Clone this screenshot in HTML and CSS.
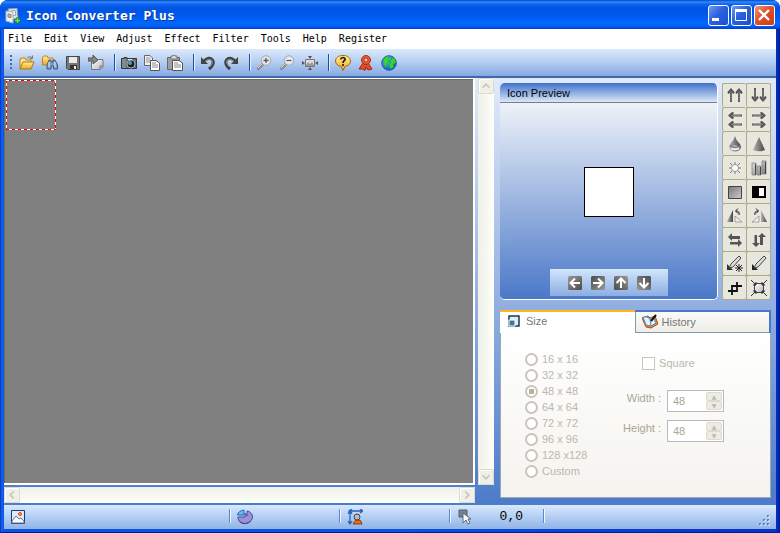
FILE: index.html
```html
<!DOCTYPE html>
<html lang="en">
<head>
<meta charset="utf-8">
<title>Icon Converter Plus</title>
<link rel="stylesheet" href="styles.css">
</head>
<body>
<svg class="defs" aria-hidden="true">
  <defs>
    <linearGradient id="gold" x1="0" y1="0" x2="0" y2="1"><stop offset="0" stop-color="#fff0a0"/><stop offset="1" stop-color="#eda51c"/></linearGradient>
    <linearGradient id="metal" x1="0" y1="0" x2="1" y2="1"><stop offset="0" stop-color="#e8e8e8"/><stop offset="1" stop-color="#777"/></linearGradient>
    <linearGradient id="dark" x1="0" y1="0" x2="1" y2="0"><stop offset="0" stop-color="#b5b5b5"/><stop offset="1" stop-color="#444"/></linearGradient>
    <linearGradient id="gray" x1="0" y1="0" x2="1" y2="1"><stop offset="0" stop-color="#777"/><stop offset="1" stop-color="#ccc"/></linearGradient>
    <linearGradient id="paper" x1="0" y1="0" x2="1" y2="1"><stop offset="0" stop-color="#fff"/><stop offset="1" stop-color="#b5b8bc"/></linearGradient>
    <radialGradient id="globe" cx=".35" cy=".3" r=".8"><stop offset="0" stop-color="#66c8ff"/><stop offset="1" stop-color="#0848c8"/></radialGradient>
    <radialGradient id="lens"><stop offset="0" stop-color="#fff"/><stop offset="1" stop-color="#d2d8e2"/></radialGradient>
    <linearGradient id="tile" x1="0" y1="0" x2="1" y2="1"><stop offset="0" stop-color="#999"/><stop offset="1" stop-color="#4a4a4a"/></linearGradient>
    <symbol id="arrow-up" viewBox="0 0 8 14"><path d="M4 0 7.500 4 7 6 5 5V14H3V5L1 6 .5 4Z" fill="#555"/><path d="M4 3V13" stroke="#999" stroke-width=".7"/></symbol>
    <symbol id="arrow-left" viewBox="0 0 14 7"><path d="M0 3.500 4 0 6 .5 5 2.500H14V4.500H5L6 6.500 4 7Z" fill="#555"/><path d="M3 3.500H13" stroke="#999" stroke-width=".7"/></symbol>
    <symbol id="nav-left" viewBox="0 0 14 14"><rect width="14" height="14" rx="1.500" fill="url(#tile)"/><path d="M7 2.500 2.500 7 7 11.500M3 7H12" fill="none" stroke="#fff" stroke-width="2"/></symbol>
  </defs>
</svg>
<div class="window">
  <header class="titlebar">
    <svg class="icon" viewBox="0 0 16 16"><path d="M3 1 12 0 13 10 5 12Z" fill="#dce5ef" stroke="#8799ad"/><path d="M6 3 10 2.500 11 7 7 8Z" fill="#fff" stroke="#829ab2"/><path d="M1 3 8 4V15L1 13Z" fill="#f0f0ee" stroke="#b0b0b4"/><path d="M3 6 6 6.500V9.500L3 9Z" fill="#adc6dd" stroke="#6b7f91"/><path d="M9.500 12.500H15.500M12.500 9.500V15.500" stroke="#087c20" stroke-width="3"/><path d="M10 12.500H15M12.500 10V15" stroke="#72df55" stroke-width="1.500"/></svg>
    <h1>Icon Converter Plus</h1>
    <button class="caption" aria-label="Minimize"><svg viewBox="0 0 21 21"><path d="M4 14.500H11" stroke="#fff" stroke-width="3"/></svg></button>
    <button class="caption" aria-label="Maximize"><svg viewBox="0 0 21 21"><path d="M4.500 6V15.500H15.500V6" fill="none" stroke="#fff"/><path d="M4 5.500H16" stroke="#fff" stroke-width="3"/></svg></button>
    <button class="caption close" aria-label="Close"><svg viewBox="0 0 21 21"><path d="M5 5 15 15M15 5 5 15" stroke="#fff" stroke-width="2.400"/></svg></button>
  </header>
  <nav class="menu">
    <button>File</button><button>Edit</button><button>View</button><button>Adjust</button><button>Effect</button><button>Filter</button><button>Tools</button><button>Help</button><button>Register</button>
  </nav>
  <div class="toolbar">
    <span class="grip"></span>
    <button aria-label="Open"><svg class="icon" viewBox="0 0 16 16"><path d="M1 14V4L3 3H6L7 5H12V8" fill="#ffe48d" stroke="#bc831e"/><path d="M1 14 4 7H15L12 14Z" fill="url(#gold)" stroke="#ad731a"/><path d="M8 3Q10 .5 13 2.500M13.500 .5V3.500H10.500" fill="none" stroke="#777"/></svg></button>
    <button aria-label="Browse"><svg class="icon" viewBox="0 0 16 16"><path d="M.5 10V2L2 1H5L6 3H11V10Z" fill="url(#gold)" stroke="#bd8322"/><path d="M5 14V10L7 5H9V7H11V5H13L15.500 10V14H11.500V11H9V14Z" fill="#7f9fc8" stroke="#385d88"/><path d="M7 7V12M13 7V12" stroke="#dbeaff"/></svg></button>
    <button aria-label="Save"><svg class="icon" viewBox="0 0 16 16"><path d="M1.500 1.500H14.500V14.500H3L1.500 13Z" fill="#777" stroke="#474747"/><path d="M4 2H12V8H4Z" fill="#e9e9e9"/><path d="M5 10H12V14H5Z" fill="#333"/><path d="M9 11H11V14H9Z" fill="#eee"/></svg></button>
    <button aria-label="Export"><svg class="icon" viewBox="0 0 16 16"><path d="M3.500 4.500H15V12L12 14.500H3.500Z" fill="url(#paper)" stroke="#72777f"/><path d="M15 11H12V14" fill="none" stroke="#777"/><path d="M0 3H5V0L10 5 5 9V6H0Z" fill="#858585" stroke="#555"/></svg></button>
    <i></i>
    <button aria-label="Capture"><svg class="icon" viewBox="0 0 16 16"><path d="M.5 3.500H3V2.500H6V3.500H15.500V13.500H.5Z" fill="#687078" stroke="#33383d"/><path d="M2 4V13M4 4V13" stroke="#9ca2a7"/><circle cx="10" cy="9" r="4" fill="#172127" stroke="#a8adb0"/><circle cx="9" cy="8" r="2" fill="#5396bb"/><path d="M7 4H11V5H7" fill="#ddd"/></svg></button>
    <button aria-label="Copy"><svg class="icon" viewBox="0 0 16 16"><path d="M.5 .5H6L8.500 3V10.500H.5Z" fill="#eee" stroke="#666"/><path d="M2 3H6M2 5H7M2 7H7" stroke="#999"/><path d="M6.500 5.500H12L15.500 8V15.500H6.500Z" fill="#fff" stroke="#555"/><path d="M8 8H12M8 10H14M8 12H14" stroke="#888"/></svg></button>
    <button aria-label="Paste"><svg class="icon" viewBox="0 0 16 16"><path d="M.5 2.500H12.500V14.500H.5Z" fill="#a0a0a0" stroke="#666"/><path d="M4 1H6L7 0 8 1H10V4H4Z" fill="#ddd" stroke="#777"/><path d="M5.500 5.500H12L15.500 8V15.500H5.500Z" fill="#fff" stroke="#555"/><path d="M7 8H11M7 10H14M7 12H14" stroke="#888"/></svg></button>
    <i></i>
    <button aria-label="Undo"><svg class="icon" viewBox="0 0 16 16"><path id="undo" d="M4 6Q9 1 12.500 5 15 9 9 14" fill="none" stroke="#3e3e3e" stroke-width="3"/><path d="M1 2V9H8Z" fill="#444"/><path d="M5 6Q9 2.500 12 5 14 8 10 12" fill="none" stroke="#858585"/></svg></button>
    <button aria-label="Redo"><svg class="icon" viewBox="0 0 16 16"><path d="M12 6Q7 1 3.500 5 1 9 7 14" fill="none" stroke="#3e3e3e" stroke-width="3"/><path d="M15 2V9H8Z" fill="#444"/><path d="M11 6Q7 2.500 4 5 2 8 6 12" fill="none" stroke="#858585"/></svg></button>
    <i></i>
    <button aria-label="Zoom in"><svg class="icon" viewBox="0 0 16 16"><path d="M7 9 1.500 14.500" stroke="#8e8981" stroke-width="3"/><path d="M6 9 2 13" stroke="#dedbd5"/><circle cx="10" cy="5.500" r="4.800" fill="url(#lens)" stroke="#aaa"/><path d="M7.500 5.500H12.500M10 3V8" stroke="#555" stroke-width="1.300"/></svg></button>
    <button aria-label="Zoom out"><svg class="icon" viewBox="0 0 16 16"><path d="M7 9 1.500 14.500" stroke="#8e8981" stroke-width="3"/><path d="M6 9 2 13" stroke="#dedbd5"/><circle cx="10" cy="5.500" r="4.800" fill="url(#lens)" stroke="#aaa"/><path d="M7.500 5.500H12.500" stroke="#555" stroke-width="1.300"/></svg></button>
    <button aria-label="Fit"><svg class="icon" viewBox="0 0 16 16"><path d="M3.500 4.500H12.500V11.500H3.500Z" fill="#ddd" stroke="#777"/><path d="M4 10 6 7 8 9 10 7 12 10V11H4Z" fill="#999"/><path d="M6 1H10L8 4ZM6 15H10L8 12ZM0 6V10L3 8ZM16 6V10L13 8Z" fill="#555"/></svg></button>
    <i></i>
    <button aria-label="Help"><svg class="icon" viewBox="0 0 16 16"><path d="M8 .5C3 .5 .5 3 .5 6S3 11 6 11.500L8 15.500 10 11.500C13 11 15.500 9 15.500 6S13 .5 8 .5Z" fill="url(#gold)" stroke="#a96800"/><path d="M5.500 4.500Q6 2.500 8 2.500 10.500 3 10 5 8 6 8 8M8 9V11" fill="none" stroke="#291c00" stroke-width="1.700"/></svg></button>
    <button aria-label="Register"><svg class="icon" viewBox="0 0 16 16"><path d="M5 8 1 14H5L7 15.500 8 12 10 15 14 14 10 8Z" fill="#e74b25" stroke="#9e260e"/><circle cx="8" cy="5" r="4.500" fill="#ec5932" stroke="#aa2c10"/><circle cx="8" cy="5" r="2" fill="#ffc4a9" stroke="#b23a1c"/></svg></button>
    <button aria-label="Web site"><svg class="icon" viewBox="0 0 16 16"><circle cx="8" cy="8" r="7.300" fill="url(#globe)" stroke="#245ac1"/><path d="M2 5 5 1.500 8 1 7 4 9 6 6 8 5 13 3 10ZM10 1.500 14 4 15 8 12 9 13 12 9 14 8 10 10 7 8 6 11 4Z" fill="#36d52f" stroke="#159a21" stroke-width=".5"/></svg></button>
  </div>
  <main class="work">
    <section class="editor">
      <div class="canvas"><div class="selection"></div></div>
      <div class="scroll vertical">
        <button aria-label="Scroll up"><svg viewBox="0 0 16 16"><path d="M4 10 8 6 12 10" /></svg></button>
        <button aria-label="Scroll down"><svg viewBox="0 0 16 16"><path d="M4 6 8 10 12 6" /></svg></button>
      </div>
      <div class="scroll horizontal">
        <button aria-label="Scroll left"><svg viewBox="0 0 16 16"><path d="M10 4 6 8 10 12" /></svg></button>
        <button aria-label="Scroll right"><svg viewBox="0 0 16 16"><path d="M6 4 10 8 6 12" /></svg></button>
      </div>
    </section>
    <aside class="side">
      <div class="upper">
        <section class="preview">
          <h2>Icon Preview</h2>
          <div class="stage">
            <div class="thumb"></div>
            <div class="moves">
              <button aria-label="Move left"><svg viewBox="0 0 14 14"><use href="#nav-left" width="14" height="14"/></svg></button>
              <button aria-label="Move right"><svg viewBox="0 0 14 14"><use href="#nav-left" width="14" height="14" transform="rotate(180 7 7)"/></svg></button>
              <button aria-label="Move up"><svg viewBox="0 0 14 14"><use href="#nav-left" width="14" height="14" transform="rotate(90 7 7)"/></svg></button>
              <button aria-label="Move down"><svg viewBox="0 0 14 14"><use href="#nav-left" width="14" height="14" transform="rotate(270 7 7)"/></svg></button>
            </div>
          </div>
        </section>
        <div class="palette">
          <button aria-label="Shift up"><svg viewBox="0 0 16 16"><use href="#arrow-up" width="8" height="14"/><use href="#arrow-up" x="8" width="8" height="14"/></svg></button>
          <button aria-label="Shift down"><svg viewBox="0 0 16 16"><g transform="rotate(180 8 7)"><use href="#arrow-up" width="8" height="14"/><use href="#arrow-up" x="8" width="8" height="14"/></g></svg></button>
          <button aria-label="Shift left"><svg viewBox="0 0 16 16"><use href="#arrow-left" x="1" width="14" height="7"/><use href="#arrow-left" x="1" y="9" width="14" height="7"/></svg></button>
          <button aria-label="Shift right"><svg viewBox="0 0 16 16"><g transform="rotate(180 8 8)"><use href="#arrow-left" x="1" width="14" height="7"/><use href="#arrow-left" x="1" y="9" width="14" height="7"/></g></svg></button>
          <button aria-label="Blur"><svg viewBox="0 0 16 16"><path d="M8 0Q9 4 12 7C16 11 13 15.500 8 15.500S0 11 4 7Q7 4 8 0Z" fill="url(#dark)"/><ellipse cx="8" cy="12" rx="4.500" ry="2.500" fill="#e5e5e5"/><path d="M3 9Q8 12 13 9L13 11Q8 13 3 11Z" fill="#777"/></svg></button>
          <button aria-label="Sharpen"><svg viewBox="0 0 16 16"><path d="M8 1 14 14Q8 16.500 2 14Z" fill="url(#dark)"/></svg></button>
          <button aria-label="Brightness"><svg viewBox="0 0 16 16"><path d="M8 2V14M2 8H14M3 3 13 13M13 3 3 13" stroke="#777"/><circle cx="8" cy="8" r="3.500" fill="#fff" stroke="#999"/></svg></button>
          <button aria-label="Levels"><svg viewBox="0 0 16 16"><path d="M1 3H5V15H1ZM6 6H10V15H6ZM11 1H15V14H11Z" fill="url(#metal)" stroke="#777" stroke-width=".7"/><path d="M4.500 4V15M9.500 7V15M14.500 2V14" stroke="#444"/></svg></button>
          <button aria-label="Grayscale"><svg viewBox="0 0 16 16"><path d="M1.500 2.500H14.500V14.500H1.500Z" fill="url(#gray)" stroke="#444"/></svg></button>
          <button aria-label="Black and white"><svg viewBox="0 0 16 16"><path d="M1 2H15V14H1Z" fill="#000"/><path d="M8 4H13V12H8Z" fill="#fff"/></svg></button>
          <button aria-label="Rotate left"><svg viewBox="0 0 16 16"><path d="M6 2V14H0Z" fill="url(#dark)"/><path d="M8 8 15 14H8Z" fill="#eee" stroke="#888" stroke-width=".7"/><path d="M12 7Q13 3 9 3M11 .5 8.500 3 11 5.500" fill="none" stroke="#222"/></svg></button>
          <button aria-label="Rotate right"><svg viewBox="0 0 16 16"><path d="M10 2V14H16Z" fill="url(#dark)"/><path d="M8 8 1 14H8Z" fill="#eee" stroke="#888" stroke-width=".7"/><path d="M4 7Q3 3 7 3M5 .5 7.500 3 5 5.500" fill="none" stroke="#222"/></svg></button>
          <button aria-label="Flip horizontal"><svg viewBox="0 0 16 16"><path id="swap" d="M1 5 5 1V4H13V7H5V9ZM15 11 11 7V10H3V12.500H11V15Z" fill="#555"/></svg></button>
          <button aria-label="Flip vertical"><svg viewBox="0 0 16 16"><use href="#swap" transform="rotate(90 8 8)"/></svg></button>
          <button aria-label="Magic pen"><svg viewBox="0 0 16 16"><path d="M12 0 14 2 6 11 2 12 4 8Z" fill="#ddd" stroke="#444"/><path d="M0 8V14H6L4 12H2V10Z" fill="#333"/><path d="M12 8V16M8 12H16M9 9 15 15M15 9 9 15" stroke="#222"/></svg></button>
          <button aria-label="Pen"><svg viewBox="0 0 16 16"><path d="M13 0 15 2 7 11 3 12 5 8Z" fill="#ddd" stroke="#444"/><path d="M1 8V14H7L5 12H3V10Z" fill="#222"/></svg></button>
          <button aria-label="Crop"><svg viewBox="0 0 16 16"><path d="M1 11H10V2M5 15V6H15" fill="none" stroke="#111" stroke-width="1.800"/></svg></button>
          <button aria-label="Resize"><svg viewBox="0 0 16 16"><path d="M3.500 3.500H12.500V12.500H3.500Z" fill="url(#paper)" stroke="#444"/><path d="M0 0 5 5M16 0 11 5M0 16 5 11M16 16 11 11M2 5H5V2M11 2V5H14M2 11H5V14M11 14V11H14" fill="none" stroke="#333"/></svg></button>
        </div>
      </div>
      <section class="options">
        <div class="tabs" role="tablist">
          <button class="active" role="tab" aria-selected="true"><svg viewBox="0 0 12 12"><path d="M1 1H11V11H1Z" fill="#d7eef6" stroke="#173c50" stroke-width="1.500"/><path d="M1 5H7V11H1Z" fill="#3f7c9b" stroke="#fff"/></svg>Size</button>
          <button role="tab" aria-selected="false"><svg class="icon" viewBox="0 0 16 16"><path d="M0 4 6 2 8 4 13 2 16 10 9 14 4 13Z" fill="#ee8732" stroke="#a45420"/><path d="M1 3 5 3 8 5 11 3 14 9 9 12 4 11Z" fill="#e2f4ff" stroke="#5288b9"/><path d="M8 5 9 12" stroke="#5787b4"/><path d="M9 7 14 1" stroke="#111" stroke-width="2"/></svg>History</button>
        </div>
        <form class="size">
          <fieldset disabled>
            <label><input type="radio" name="size">16 x 16</label>
            <label><input type="radio" name="size">32 x 32</label>
            <label><input type="radio" name="size" checked>48 x 48</label>
            <label><input type="radio" name="size">64 x 64</label>
            <label><input type="radio" name="size">72 x 72</label>
            <label><input type="radio" name="size">96 x 96</label>
            <label><input type="radio" name="size">128 x128</label>
            <label><input type="radio" name="size">Custom</label>
          </fieldset>
          <div class="fields">
            <label class="square"><input type="checkbox" disabled>Square</label>
            <div class="field"><label for="width">Width :</label><span class="spin"><input id="width" type="text" value="48" disabled><span><button type="button" disabled aria-label="Increase width">▲</button><button type="button" disabled aria-label="Decrease width">▼</button></span></span></div>
            <div class="field"><label for="height">Height :</label><span class="spin"><input id="height" type="text" value="48" disabled><span><button type="button" disabled aria-label="Increase height">▲</button><button type="button" disabled aria-label="Decrease height">▼</button></span></span></div>
          </div>
        </form>
      </section>
    </aside>
  </main>
  <footer class="status">
    <div><svg class="icon" viewBox="0 0 16 16"><path d="M1.500 1.500H14.500V14.500H1.500Z" fill="#dbe9fa" stroke="#1c3974"/><path d="M2 12 6 7 9 10 11 9 14 12V14H2Z" fill="#f7fbff" stroke="#697b9b"/><circle cx="10" cy="5" r="1.500" fill="#ffb22e" stroke="#dd441b"/></svg></div>
    <div><svg class="icon" viewBox="0 0 16 16"><path d="M8 4V8H1C1 18 16 16 15.500 7 15 4 12 2 10 2V7Z" fill="#9a91dc" stroke="#514c91"/><path d="M7 1V6H.5Q1 2 7 1Z" fill="#65bef4" stroke="#176da7"/><path d="M2 12Q8 17 14 12" fill="none" stroke="#4d4784"/></svg></div>
    <div><svg class="icon" viewBox="0 0 16 16"><path d="M3 3V14M1 5 3 2 5 5M1 12 3 15 5 12M3 2H15M5 0 2 2 5 4M13 0 16 2 13 4" fill="none" stroke="#2463b7" stroke-width="1.300"/><path d="M6 15Q8 10 11 11 14 10 15 15Z" fill="#ed6b1d" stroke="#8d4317"/><circle cx="10" cy="8" r="3" fill="#bbb" stroke="#444"/></svg></div>
    <div class="position"><svg class="icon" viewBox="0 0 16 16"><path d="M2 1H10V8H2Z" fill="#778292" stroke="#536071"/><path d="M6 4V14L9 11 11 15 13 14 11 10H14Z" fill="#fff" stroke="#5b6676"/></svg><output>0,0</output></div>
    <div class="rest"><svg viewBox="0 0 12 12"><path d="M9 1H11M9 5H11M9 9H11M5 5H7M5 9H7M1 9H3" stroke="#587eb7" stroke-width="2"/><path d="M10 2H12M10 6H12M10 10H12M6 6H8M6 10H8M2 10H4" stroke="#e9f4ff"/></svg></div>
  </footer>
</div>
</body>
</html>
```

FILE: styles.css
```css
* { box-sizing: border-box; }
body { margin: 0; background: #fff; color: #000; font: 11px/16px "Liberation Sans", sans-serif; }
button { padding: 0; border: 0; background: none; color: inherit; font: inherit; }
svg { display: block; flex: none; }
.defs { position: absolute; width: 0; height: 0; }
.icon { width: 16px; height: 16px; }
.window { display: flex; flex-direction: column; min-height: 100vh; padding: 0 4px 3px; background: linear-gradient(90deg, #0030c0, #1464f0 2px, #0854e0 4px, #0854e0 50%, #0831c8 calc(100% - 4px), #001c98); border-bottom: 1px solid #001c98; border-radius: 8px 8px 0 0; overflow: hidden; }
.titlebar { display: flex; align-items: center; gap: 2px; height: 29px; margin: 0 -4px; padding: 2px 5px 0; background: linear-gradient(#0844c0, #2f8cff 2px, #1266f0 4px, #0054e3 8px, #0058ee 16px, #0068ff 23px, #0060f8 26px, #003dcc); }
.titlebar h1 { flex: 1; margin: 0 0 0 3px; color: #fff; font: bold 13px/20px "DejaVu Sans Mono", monospace; text-shadow: 1px 1px #103890; }
.caption { width: 21px; height: 21px; border: 1px solid #fff; border-radius: 3px; background: linear-gradient(135deg, #6e9cf5, #2b61e0 45%, #1d4fd0); overflow: hidden; }
.caption svg { width: 21px; height: 21px; margin: -1px; }
.close { background: linear-gradient(135deg, #f19a7d, #e0502b 45%, #c83c14); }
.menu { display: flex; gap: 12px; height: 20px; padding: 0 4px; background: #fff; font: 10px/20px "DejaVu Sans Mono", monospace; }
.toolbar { display: flex; align-items: center; height: 29px; padding: 0 0 0 5px; background: linear-gradient(#dbe9fb, #b8d0f3 12px, #85aae0 27px); border-bottom: 2px solid #4169ae; }
.toolbar button { width: 23px; height: 16px; }
.toolbar i { width: 10px; height: 17px; background: linear-gradient(90deg, transparent 3px, #194f9b 3px 4px, #e2efff 4px 5px, transparent 5px); }
.grip { width: 10px; height: 16px; background: conic-gradient(from 0deg at 2px 2px, transparent 75%, #426bae 0) 1px 0 / 9px 4px; }
.work { display: flex; flex: 1; gap: 6px; padding-right: 5px; background: linear-gradient(#e1eafa, #4c7bca); }
.editor { display: grid; flex: 1; grid-template: 1fr 16px / 1fr 16px; gap: 2px 3px; padding-bottom: 2px; }
.canvas { border: 1px solid #fff; border-width: 1px 2px 2px 0; background: #808080; box-shadow: inset 1px 1px #6b6a61; padding: 1px 2px; }
.selection { width: 50px; height: 50px; background: repeating-linear-gradient(90deg, #fff 0 3px, red 3px 6px) top / 100% 1px no-repeat, repeating-linear-gradient(90deg, red 0 3px, #fff 3px 6px) bottom / 100% 1px no-repeat, repeating-linear-gradient(red 0 3px, #fff 3px 6px) left / 1px 100% no-repeat, repeating-linear-gradient(#fff 0 3px, red 3px 6px) right / 1px 100% no-repeat; }
.scroll { display: flex; justify-content: space-between; background: #fafaf5; }
.vertical { flex-direction: column; background: linear-gradient(90deg, #f0f0ea, #fefefa); }
.horizontal { background: linear-gradient(#f0f0ea, #fefefa); }
.scroll button { width: 16px; height: 16px; border: 1px solid #dcdbcc; border-radius: 2px; background: #f1f0e8; box-shadow: inset 1px 1px #fff; }
.scroll svg { width: 14px; height: 14px; fill: none; stroke: #c5c5ba; stroke-width: 2px; }
.side { display: flex; flex-direction: column; width: 271px; gap: 10px; padding: 5px 0 7px; }
.upper { display: flex; justify-content: space-between; height: 217px; }
.preview { display: flex; flex-direction: column; width: 218px; border: 1px solid #fff; border-width: 0 1px 1px 0; border-radius: 5px; overflow: hidden; }
.preview h2 { margin: 0; padding: 2px 7px 1px; border-bottom: 1px solid #777f8c; background: linear-gradient(#3f72ca, #dce7f8); font: inherit; }
.stage { display: flex; flex: 1; flex-direction: column; align-items: center; justify-content: space-between; padding: 64px 0 3px 1px; background: linear-gradient(#eef2f8, #4a78c8); }
.thumb { width: 50px; height: 50px; border: 1px solid #000; background: #fff; }
.moves { display: flex; align-items: center; justify-content: center; gap: 9px; width: 118px; height: 27px; background: linear-gradient(#d2e5fb, #8caee2); }
.moves svg { width: 14px; height: 14px; }
.palette { display: grid; grid-template-columns: 24px 24px; grid-auto-rows: 24px; width: 49px; height: 217px; border: solid #adac84; border-width: 0 1px 1px 0; }
.palette button { display: grid; place-items: center; border: solid #adac84; border-width: 1px 0 0 1px; border-radius: 2px; background: #e8e7dd; }
.palette svg { width: 16px; height: 16px; }
.options { display: flex; flex: 1; flex-direction: column; background: #4a78c8; }
.tabs { display: grid; grid-template-columns: 1fr 1fr; height: 23px; padding-right: 2px; color: #777; }
.tabs button { display: flex; align-items: center; gap: 4px; margin-top: 2px; padding: 0 6px; border: 1px solid #8299b2; border-width: 0 0 1px 1px; background: linear-gradient(#fafafa, #eeede6); }
.tabs svg { width: 16px; height: 16px; }
.tabs .active { gap: 6px; margin: 0; padding: 0 8px 3px; border: 0; border-top: 2px solid #ffb719; background: #fff; }
.tabs .active svg { width: 12px; height: 12px; }
.size { display: flex; flex: 1; justify-content: space-between; margin: 0; padding: 18px 46px 0 24px; border: 1px solid #9aa9ba; border-top: 0; background: linear-gradient(#fff, #f4f3ee); color: #bcb8ad; }
fieldset { margin: 0; padding: 0; border: 0; }
fieldset label, .square { display: flex; align-items: center; height: 16px; gap: 4px; }
input { margin: 0; }
input[type="radio"] { appearance: none; width: 13px; height: 13px; border: 2px solid #cbc4bc; border-radius: 50%; background: #fff; }
input[type="radio"]:checked { background: linear-gradient(#b7b1a2, #b7b1a2) center / 5px 5px no-repeat #fff; }
.fields { display: flex; flex-direction: column; align-items: flex-end; gap: 8px; padding-top: 4px; color: #aaa697; }
.square { align-self: flex-start; margin: 0 0 11px 19px; color: #bcb8ad; }
input[type="checkbox"] { appearance: none; width: 13px; height: 13px; border: 1px solid #cbc4bc; background: #fff; }
.field { display: flex; gap: 6px; }
.spin { display: flex; width: 57px; height: 22px; padding: 1px; border: 1px solid #b9b9c1; background: #fff; }
.spin input { flex: 1; min-width: 0; padding: 0 4px; border: 0; background: #fff; color: #aaa697; font: 11px/16px "Liberation Sans", sans-serif; }
.spin > span { display: flex; flex-direction: column; width: 16px; }
.spin button { flex: 1; border: 1px solid #dddccb; border-radius: 2px; background: #edece2; color: #bbb9aa; font: 6px/6px "DejaVu Sans", sans-serif; }
.status { display: grid; grid-template-columns: 227px 110px 110px 94px 1fr; height: 24px; border-top: 1px solid #d5e8fc; background: linear-gradient(#d5e6fc, #8fb4e7); }
.status div { display: flex; align-items: center; padding: 0 6px 2px; background: linear-gradient(90deg, transparent calc(100% - 2px), #5588cc calc(100% - 2px) calc(100% - 1px), #f0f7ff calc(100% - 1px)) 0 3px / 100% 14px no-repeat; }
.status .position { justify-content: space-between; padding-right: 22px; font: 13px/16px "Liberation Mono", monospace; }
.status .rest { justify-content: flex-end; align-items: flex-end; background: none; }
.rest svg { width: 12px; height: 12px; }
```
